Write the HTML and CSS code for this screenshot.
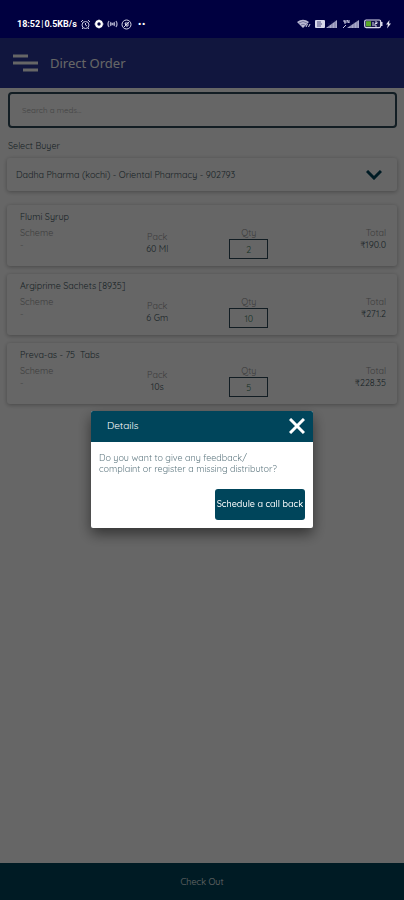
FILE: index.html
```html
<!doctype html>
<html lang="en">

<head>
  <meta charset="utf-8">
  <meta name="viewport" content="width=device-width, initial-scale=1">
  <title>Direct Order</title>
  <link rel="stylesheet" href="styles.css">
</head>

<body>

  <div class="status">
    <div class="status-left">
      <span>18:52</span><span class="sep">|</span><span>0.5KB/s</span>
      <svg width="11" height="11" viewBox="0 0 11 11" fill="none" stroke="#c9c9e0">
        <circle cx="5.500" cy="6" r="3.500" />
        <path d="M1 3l2-2M10 3L8 1M5.500 4v2l1.500 1M3 9l-1 1M8 9l1 1" />
      </svg>
      <svg width="10" height="10" viewBox="0 0 10 10" fill="none" stroke="#fff" stroke-width="2.200">
        <circle cx="5" cy="5" r="2.800" />
        <path stroke-width="1" d="M5 .5v1M5 8.500v1M.5 5h1M8.500 5h1" />
      </svg>
      <svg width="11" height="10" viewBox="0 0 11 10" fill="none" stroke="#a5a5c4" stroke-width="1.300">
        <path d="M2 2Q0 5 2 8M9 2q2 3 0 6M4 3Q3 5 4 7M7 3q1 2 0 4" />
        <circle cx="5.500" cy="5" r=".7" fill="#fff" />
      </svg>
      <svg width="11" height="11" viewBox="0 0 11 11" fill="none" stroke="#d6d6e6">
        <circle cx="5.500" cy="5.500" r="4.500" />
        <path d="M3 8l5-5M4 4h3v3H5z" />
      </svg>
      <b class="dots">··</b>
    </div>
    <div class="status-right">
      <svg width="14" height="10" viewBox="0 0 14 10">
        <path d="M0 3Q6-1.500 12 3L6 9z" fill="#b9b9d2" />
        <path d="M2 4q4-3 8 0M4 6q2-1.500 4 0" fill="none" stroke="#33336b" stroke-width=".5" />
        <path d="M9 8l1.500-3M11.500 8L13 5" stroke="#d0d0e0" stroke-width="1" />
      </svg>
      <svg width="23" height="10" viewBox="0 0 23 10">
        <rect x="0" y="1" width="10" height="8" rx="1" fill="#d9d9ea" />
        <path d="M2 3h4M2 5h5M2 7h4" stroke="#33336b" stroke-width=".8" />
        <path d="M11 9l11-8v8z" fill="#a9a9c8" />
        <path d="M14 4v5M17 2v7M20 1v8" stroke="#33336b" stroke-width=".4" />
      </svg>
      <svg width="18" height="10" viewBox="0 0 18 10">
        <path d="M2 1v2h2M3 1v4M5 4V1l2 3V1M1 9l3-3" fill="none" stroke="#c9c9de" stroke-width="1" />
        <path d="M5 9l12-8v8z" fill="#a9a9c8" />
        <path d="M9 5v4M12 3v6M15 1v8" stroke="#33336b" stroke-width=".4" />
      </svg>
      <svg width="28" height="10" viewBox="0 0 28 10">
        <rect x=".7" y="1" width="16" height="7.600" rx="1.500" fill="#16164a" stroke="#d9d9ea" stroke-width="1.200" />
        <rect x="2" y="2.200" width="5" height="5.200" fill="#5aa82a" />
        <path d="M9 3v4M11 3h2v1.500h-2V7h2" fill="none" stroke="#d9d9ea" />
        <path d="M17.500 3v4" stroke="#d9d9ea" stroke-width="2" />
        <path d="M25.500 1L22 5.500h2L23 9.500l4-5h-2z" fill="#e4e4f0" />
      </svg>
    </div>
  </div>

  <header class="header">
    <button class="menu" type="button" aria-label="Menu">
      <svg width="25" height="18" viewBox="0 0 25 18" fill="none" stroke="#fff" stroke-width="3">
        <path d="M0 2h15M0 9h25M10 16h15" />
      </svg>
    </button>
    <h1>Direct Order</h1>
  </header>

  <main class="content">
    <input class="search" type="text" placeholder="Search a meds..." aria-label="Search">

    <label class="buyer-label" for="buyer">Select Buyer</label>
    <div class="buyer">
      <select id="buyer">
        <option>Dadha Pharma (kochi) - Oriental Pharmacy - 902793</option>
      </select>
      <svg class="arrow" width="16" height="10" viewBox="0 0 16 10" fill="none" stroke="#00455b" stroke-width="3">
        <path d="M1 1l7 7 7-7" />
      </svg>
    </div>

    <section class="items">
      <article class="item">
        <h2>Flumi Syrup</h2>
        <div class="cols">
          <div class="scheme"><span>Scheme</span><p>-</p></div>
          <div class="pack"><span>Pack</span><p>60 Ml</p></div>
          <div class="qty"><label for="qty1">Qty</label><input id="qty1" type="text" value="2"></div>
          <div class="total"><span>Total</span><p>₹190.0</p></div>
        </div>
      </article>
      <article class="item">
        <h2>Argiprime Sachets [8935]</h2>
        <div class="cols">
          <div class="scheme"><span>Scheme</span><p>-</p></div>
          <div class="pack"><span>Pack</span><p>6 Gm</p></div>
          <div class="qty"><label for="qty2">Qty</label><input id="qty2" type="text" value="10"></div>
          <div class="total"><span>Total</span><p>₹271.2</p></div>
        </div>
      </article>
      <article class="item">
        <h2>Preva-as - 75 &nbsp;Tabs</h2>
        <div class="cols">
          <div class="scheme"><span>Scheme</span><p>-</p></div>
          <div class="pack"><span>Pack</span><p>10s</p></div>
          <div class="qty"><label for="qty3">Qty</label><input id="qty3" type="text" value="5"></div>
          <div class="total"><span>Total</span><p>₹228.35</p></div>
        </div>
      </article>
    </section>
  </main>

  <button class="checkout" type="button">Check Out</button>

  <div class="overlay">
    <div class="dialog" role="dialog" aria-labelledby="dialog-title">
      <div class="dialog-head">
        <h2 id="dialog-title">Details</h2>
        <button class="close" type="button" aria-label="Close">
          <svg width="16" height="16" viewBox="0 0 16 16" fill="none" stroke="#fff" stroke-width="3">
            <path d="M1 1l14 14M15 1L1 15" />
          </svg>
        </button>
      </div>
      <div class="dialog-body">
        <p>Do you want to give any feedback/<br>complaint or register a missing distributor?</p>
        <button class="call" type="button">Schedule a call back</button>
      </div>
    </div>
  </div>

</body>

</html>
```
FILE: styles.css
```css
* {
  margin: 0;
  box-sizing: border-box;
}

body {
  min-height: 100vh;
  display: flex;
  flex-direction: column;
  background: #fff;
  font-family: Quicksand, Lato, sans-serif;
  font-size: 9px;
  line-height: 12px;
  color: #3d555c;
}

button,
input,
select {
  font: inherit;
  color: inherit;
}

button {
  border: 0;
  padding: 0;
  background: none;
  cursor: pointer;
}

svg {
  display: block;
  flex: none;
}

/* status bar stays above the overlay */
.status {
  position: relative;
  z-index: 2;
  height: 38px;
  padding: 10px 12px 0 17px;
  display: flex;
  justify-content: space-between;
  align-items: center;
  background: #000040;
  color: #fff;
  font-family: Roboto, sans-serif;
  font-weight: 700;
}

.status-left,
.status-right {
  display: flex;
  align-items: center;
}

.status-left svg {
  margin-left: 3px;
}

.sep {
  padding: 0 1px;
  font-weight: 400;
}

.dots {
  margin-left: 6px;
  font-size: 12px;
}

.status-right {
  gap: 4px;
}

.header {
  height: 50px;
  padding: 0 13px;
  display: flex;
  align-items: center;
  gap: 12px;
  background: #2b379b;
  color: #fff;
}

.header h1 {
  font-family: "Noto Sans", sans-serif;
  font-size: 13px;
  line-height: 18px;
  font-weight: 400;
}

.content {
  flex: 1;
  padding: 4px 7px;
  display: flex;
  flex-direction: column;
}

.search {
  height: 36px;
  margin: 0 0 0 1px;
  padding: 0 12px;
  border: 2px solid #2d4a58;
  border-radius: 4px;
  background: #fff;
  outline: 0;
  font-size: 8px;
}

.search::placeholder {
  color: #aaa;
  opacity: 1;
}

.buyer-label {
  margin: 12px 1px 6px;
}

.buyer {
  position: relative;
  border-radius: 3px;
  box-shadow: 0 1px 4px rgba(0, 0, 0, 0.3);
}

.buyer select {
  width: 100%;
  height: 33px;
  padding: 0 40px 0 9px;
  border: 0;
  background: transparent;
  appearance: none;
}

.arrow {
  position: absolute;
  right: 15px;
  top: 12px;
  pointer-events: none;
}

.items {
  margin-top: 14px;
  display: grid;
  gap: 8px;
}

.item {
  height: 61px;
  padding: 6px 11px 0 13px;
  border-radius: 3px;
  box-shadow: 0 1px 4px rgba(0, 0, 0, 0.3);
}

.item h2 {
  font-size: 9px;
  font-weight: 400;
}

.cols {
  margin-top: 4px;
  display: grid;
  grid-template-columns: repeat(4, 1fr);
}

.cols span,
.cols label {
  display: block;
  color: #999;
}

.scheme p {
  color: #aaa;
}

.pack {
  padding-top: 4px;
  text-align: center;
}

.qty {
  display: flex;
  flex-direction: column;
  align-items: center;
}

.qty input {
  width: 39px;
  height: 20px;
  border: 1px solid #2d4a58;
  background: none;
  color: #3d8062;
  text-align: center;
}

.total {
  text-align: right;
}

.checkout {
  height: 37px;
  background: #00455b;
  color: #fff;
}

.overlay {
  position: fixed;
  inset: 0;
  z-index: 1;
  padding-top: 38px;
  display: flex;
  align-items: center;
  justify-content: center;
  background: rgba(0, 0, 0, 0.6);
}

.dialog {
  width: 55%;
  min-width: 222px;
  border-radius: 2px;
  overflow: hidden;
  background: #fff;
  box-shadow: 0 6px 14px rgba(0, 0, 0, 0.5);
}

.dialog-head {
  height: 31px;
  padding: 0 8px 0 16px;
  display: flex;
  align-items: center;
  justify-content: space-between;
  background: #00455b;
  color: #fff;
}

.dialog-head h2 {
  font-size: 10px;
  font-weight: 400;
}

.dialog-body {
  padding: 10px 8px 8px;
  display: flex;
  flex-direction: column;
}

.dialog-body p {
  line-height: 11px;
  color: #5f7880;
}

.call {
  align-self: flex-end;
  height: 31px;
  margin-top: 15px;
  padding: 0 2px;
  border-radius: 3px;
  background: #00455b;
  color: #fff;
  font-weight: 500;
}
```
